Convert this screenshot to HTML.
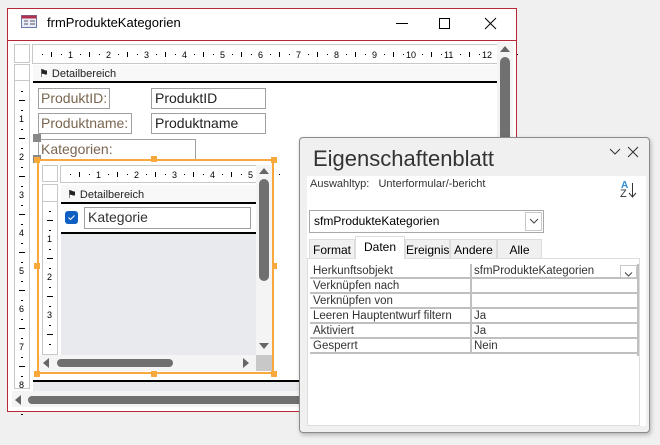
<!DOCTYPE html>
<html><head><meta charset="utf-8"><style>
*{box-sizing:border-box;margin:0;padding:0}
body{width:660px;height:445px;background:#f0f0f0;position:relative;overflow:hidden;font-family:"Liberation Sans",sans-serif;}
.a{position:absolute}
.rn{position:absolute;font-size:9px;color:#000;font-family:"Liberation Sans",sans-serif}
.lbl{position:absolute;border:1px solid #a0a0a0;color:#7a6650;font-size:14px;padding:0 2px;line-height:19px;background:#fff}
.tb{position:absolute;border:1px solid #a0a0a0;color:#222;font-size:14px;padding:0 3px;line-height:19px;background:#fff}
.row{position:absolute;left:310px;width:329px;height:15px;border-bottom:2px solid #c0c0c0;font-size:11.5px;color:#333;line-height:13px}
.row span{position:absolute;top:1px}
.row i{position:absolute;left:160px;top:0;width:2px;height:15px;background:#c0c0c0}
.tab{position:absolute;top:239px;height:19px;border:1px solid #ddd;border-bottom:none;background:#f0f0f0;font-size:12px;color:#000;text-align:center;line-height:21px}
.h{position:absolute;width:6px;height:6px;background:#f9a93c}
</style></head><body>
<div class="a" style="left:7px;top:8px;width:510px;height:404px;border:1px solid #b5283a;background:#fff"></div>
<div class="a" style="left:8px;top:40px;width:508px;height:1px;background:#b5283a"></div>
<svg class="a" style="left:21px;top:15px" width="17" height="14"><rect x="0.5" y="0.5" width="15" height="12" fill="#e8ecf5" stroke="#6a7aa8"/><rect x="0.5" y="0.5" width="15" height="3" fill="#b23050"/><path d="M3 6h4M3 9h4M9 6h5M9 9h5" stroke="#556" /></svg>
<div class="a" style="left:47px;top:15px;font-size:13px;color:#000">frmProdukteKategorien</div>
<div class="a" style="left:396px;top:23px;width:12px;height:1px;background:#000"></div>
<div class="a" style="left:439px;top:18px;width:11px;height:11px;border:1px solid #000"></div>
<svg class="a" style="left:484px;top:17px" width="13" height="13"><path d="M1 1L12 12M12 1L1 12" stroke="#000" stroke-width="1"/></svg>
<div class="a" style="left:14px;top:44px;width:16px;height:19px;border:1px solid #c8c8c8;background:#fff"></div>
<div class="a" style="left:32px;top:44px;width:465px;height:20px;border-top:1px solid #c8c8c8;border-bottom:1px solid #c8c8c8;border-left:1px solid #c8c8c8;background:#fff" id="hr"></div>
<div class="a" style="left:14px;top:64px;width:16px;height:325px;border:1px solid #c8c8c8;background:#fff" id="vr"></div>
<div class="a" style="left:14px;top:65px;width:16px;height:16px;border-bottom:1px solid #c8c8c8"></div>
<div class="a" style="left:33px;top:65px;width:464px;height:17px;background:#f8f8f8"></div>
<div class="a" style="left:33px;top:81px;width:464px;height:2px;background:#000"></div>
<div class="a" style="left:39px;top:67px;font-size:11px;color:#222">&#9873;&nbsp;Detailbereich</div>
<div class="lbl" style="left:38px;top:88px;width:72px;height:21px">ProduktID:</div>
<div class="tb" style="left:151px;top:88px;width:115px;height:21px">ProduktID</div>
<div class="lbl" style="left:38px;top:113px;width:94px;height:21px">Produktname:</div>
<div class="tb" style="left:151px;top:113px;width:115px;height:21px">Produktname</div>
<div class="lbl" style="left:38px;top:139px;width:158px;height:22px">Kategorien:</div>
<div class="a" style="left:33px;top:134px;width:8px;height:8px;background:#888"></div>
<div class="a" style="left:33px;top:155px;width:8px;height:8px;background:#888"></div>
<div class="a" style="left:33px;top:380px;width:464px;height:2px;background:#000"></div>
<div class="a" style="left:33px;top:382px;width:464px;height:9px;background:#e8eaed"></div>
<div class="a" style="left:497px;top:42px;width:16px;height:350px;background:#f4f4f4"></div>
<div class="a" style="left:500px;top:46px;width:0;height:0;border-left:5px solid transparent;border-right:5px solid transparent;border-bottom:6px solid #666"></div>
<div class="a" style="left:500px;top:57px;width:10px;height:340px;background:#707070;border-radius:5px"></div>
<div class="a" style="left:12px;top:391px;width:290px;height:16px;background:#f4f4f4"></div>
<div class="a" style="left:15px;top:395px;width:0;height:0;border-top:5px solid transparent;border-bottom:5px solid transparent;border-right:6px solid #666"></div>
<div class="a" style="left:28px;top:396px;width:275px;height:8px;background:#707070;border-radius:4px"></div>
<div class="a" style="left:37px;top:159px;width:237px;height:215px;border:2px solid #f9a93c;background:#fff"></div>
<div class="h" style="left:34px;top:157px"></div><div class="h" style="left:151px;top:156px"></div><div class="h" style="left:271px;top:157px"></div>
<div class="h" style="left:34px;top:263px"></div><div class="h" style="left:271px;top:263px"></div>
<div class="h" style="left:34px;top:371px"></div><div class="h" style="left:151px;top:371px"></div><div class="h" style="left:271px;top:371px"></div>
<div class="a" style="left:42px;top:165px;width:16px;height:17px;border:1px solid #c8c8c8"></div>
<div class="a" style="left:60px;top:165px;width:196px;height:18px;border-top:1px solid #c8c8c8;border-bottom:1px solid #c8c8c8;border-left:1px solid #c8c8c8" id="shr"></div>
<div class="a" style="left:42px;top:184px;width:16px;height:171px;border:1px solid #c8c8c8" id="svr"></div>
<div class="a" style="left:43px;top:185px;width:14px;height:17px;border-bottom:1px solid #c8c8c8"></div>
<div class="a" style="left:61px;top:185px;width:195px;height:17px;background:#f8f8f8"></div>
<div class="a" style="left:61px;top:202px;width:195px;height:2px;background:#000"></div>
<div class="a" style="left:67px;top:188px;font-size:11px;color:#222">&#9873;&nbsp;Detailbereich</div>
<div class="a" style="left:65px;top:211px;width:13px;height:13px;background:#0f5fc2;border-radius:3px"></div>
<svg class="a" style="left:65px;top:211px" width="13" height="13"><path d="M3.5 6.5l2 2 4-4" stroke="#fff" fill="none" stroke-width="1"/></svg>
<div class="tb" style="left:84px;top:207px;width:167px;height:22px;color:#333;font-size:14px">Kategorie</div>
<div class="a" style="left:61px;top:232px;width:195px;height:2px;background:#000"></div>
<div class="a" style="left:61px;top:234px;width:195px;height:121px;background:#e8eaed"></div>
<div class="a" style="left:256px;top:165px;width:16px;height:190px;background:#f4f4f4"></div>
<div class="a" style="left:259px;top:168px;border-left:5px solid transparent;border-right:5px solid transparent;border-bottom:6px solid #666"></div>
<div class="a" style="left:259px;top:179px;width:10px;height:102px;background:#707070;border-radius:5px"></div>
<div class="a" style="left:259px;top:343px;border-left:5px solid transparent;border-right:5px solid transparent;border-top:6px solid #666"></div>
<div class="a" style="left:39px;top:355px;width:217px;height:16px;background:#f4f4f4"></div>
<div class="a" style="left:256px;top:355px;width:16px;height:16px;background:#c8c8c8"></div>
<div class="a" style="left:43px;top:358px;border-top:5px solid transparent;border-bottom:5px solid transparent;border-right:6px solid #666"></div>
<div class="a" style="left:57px;top:359px;width:116px;height:8px;background:#707070;border-radius:4px"></div>
<div class="a" style="left:243px;top:358px;border-top:5px solid transparent;border-bottom:5px solid transparent;border-left:6px solid #666"></div>
<div class="a" style="left:299px;top:137px;width:351px;height:296px;border:1px solid #8a8a8a;border-radius:4px;background:#f0f0f0;box-shadow:1px 2px 4px rgba(0,0,0,.25)"></div>
<div class="a" style="left:313px;top:146px;font-size:22px;color:#333">Eigenschaftenblatt</div>
<svg class="a" style="left:609px;top:146px" width="32" height="13"><path d="M1 3l5 5 5-5" stroke="#333" fill="none"/><path d="M19 1l10 10M29 1L19 11" stroke="#333"/></svg>
<div class="a" style="left:307px;top:176px;width:339px;height:250px;background:#fff"></div>
<div class="a" style="left:310px;top:178px;font-size:11px;color:#333">Auswahltyp:&nbsp;&nbsp;&nbsp;Unterformular/-bericht</div>
<div class="a" style="left:621px;top:181px;font-size:10px;font-weight:bold;color:#2a8ad8;line-height:9px">A</div>
<div class="a" style="left:620px;top:189px;font-size:11px;color:#333;line-height:10px">Z</div>
<svg class="a" style="left:628px;top:182px" width="9" height="17"><path d="M4.5 1v14M1 11l3.5 4 3.5-4" stroke="#333" fill="none"/></svg>
<div class="a" style="left:309px;top:210px;width:235px;height:23px;border:1px solid #a8a8a8;background:#fff;font-size:12px;color:#000;padding:4px 4px;line-height:13px">sfmProdukteKategorien</div>
<div class="a" style="left:525px;top:212px;width:17px;height:19px;border:1px solid #c8c8c8;background:#fff"></div>
<svg class="a" style="left:529px;top:218px" width="10" height="7"><path d="M1 1l4 4 4-4" stroke="#444" fill="none"/></svg>
<div class="a" style="left:307px;top:258px;width:333px;height:168px;border:1px solid #ddd;background:#fff"></div>
<div class="tab" style="left:309px;width:46px">Format</div>
<div class="tab" style="left:355px;top:236px;height:23px;width:50px;background:#fff;border-color:#ddd">Daten</div>
<div class="tab" style="left:405px;width:45px">Ereignis</div>
<div class="tab" style="left:450px;width:47px">Andere</div>
<div class="tab" style="left:497px;width:45px">Alle</div>
<div class="row" style="top:264px"><span style="left:3px">Herkunftsobjekt</span><i></i><span style="left:164px">sfmProdukteKategorien</span></div>
<div class="a" style="left:620px;top:265px;width:17px;height:13px;border:1px solid #c8c8c8;background:#fff"></div>
<svg class="a" style="left:624px;top:272px" width="9" height="5"><path d="M1 0.5l3.5 3.5 3.5-3.5" stroke="#444" fill="none"/></svg>
<div class="row" style="top:279px"><span style="left:3px">Verknüpfen nach</span><i></i></div>
<div class="row" style="top:294px"><span style="left:3px">Verknüpfen von</span><i></i></div>
<div class="row" style="top:309px"><span style="left:3px">Leeren Hauptentwurf filtern</span><i></i><span style="left:164px">Ja</span></div>
<div class="row" style="top:324px"><span style="left:3px">Aktiviert</span><i></i><span style="left:164px">Ja</span></div>
<div class="row" style="top:339px"><span style="left:3px">Gesperrt</span><i></i><span style="left:164px">Nein</span></div>
<div class="a" style="left:637px;top:264px;width:2px;height:92px;background:#c0c0c0"></div>
<script>
function hr(id,x0,n,y){var e=document.getElementById(id),h='';
for(var i=0;i<=n;i++){for(var k=1;k<4;k++){var x=x0+i*38+k*9.5;if(k==2)h+='<div class="a" style="left:'+(x-1)+'px;top:'+(y+1)+'px;width:1px;height:5px;background:#000"></div>';else h+='<div class="a" style="left:'+(x-1)+'px;top:'+(y+3)+'px;width:1px;height:1px;background:#000"></div>';}
if(i>0)h+='<span class="rn" style="left:'+(x0+i*38-(i>9?7:3))+'px;top:'+(y-1)+'px">'+i+'</span>';}
e.innerHTML=h;}
function vr(id,y0,n){var e=document.getElementById(id),h='';
for(var i=0;i<=n;i++){for(var k=1;k<4;k++){var y=y0+i*38+k*9.5;if(k==2)h+='<div class="a" style="left:4px;top:'+(y-1)+'px;width:6px;height:1px;background:#000"></div>';else h+='<div class="a" style="left:6px;top:'+(y-1)+'px;width:2px;height:1px;background:#000"></div>';}
if(i>0)h+='<span class="rn" style="left:4px;top:'+(y0+i*38-6)+'px">'+i+'</span>';}
e.innerHTML=h;}
hr('hr',0,12,6);hr('shr',0,5,5);vr('vr',17,8);vr('svr',17,3);
</script>
</body></html>
